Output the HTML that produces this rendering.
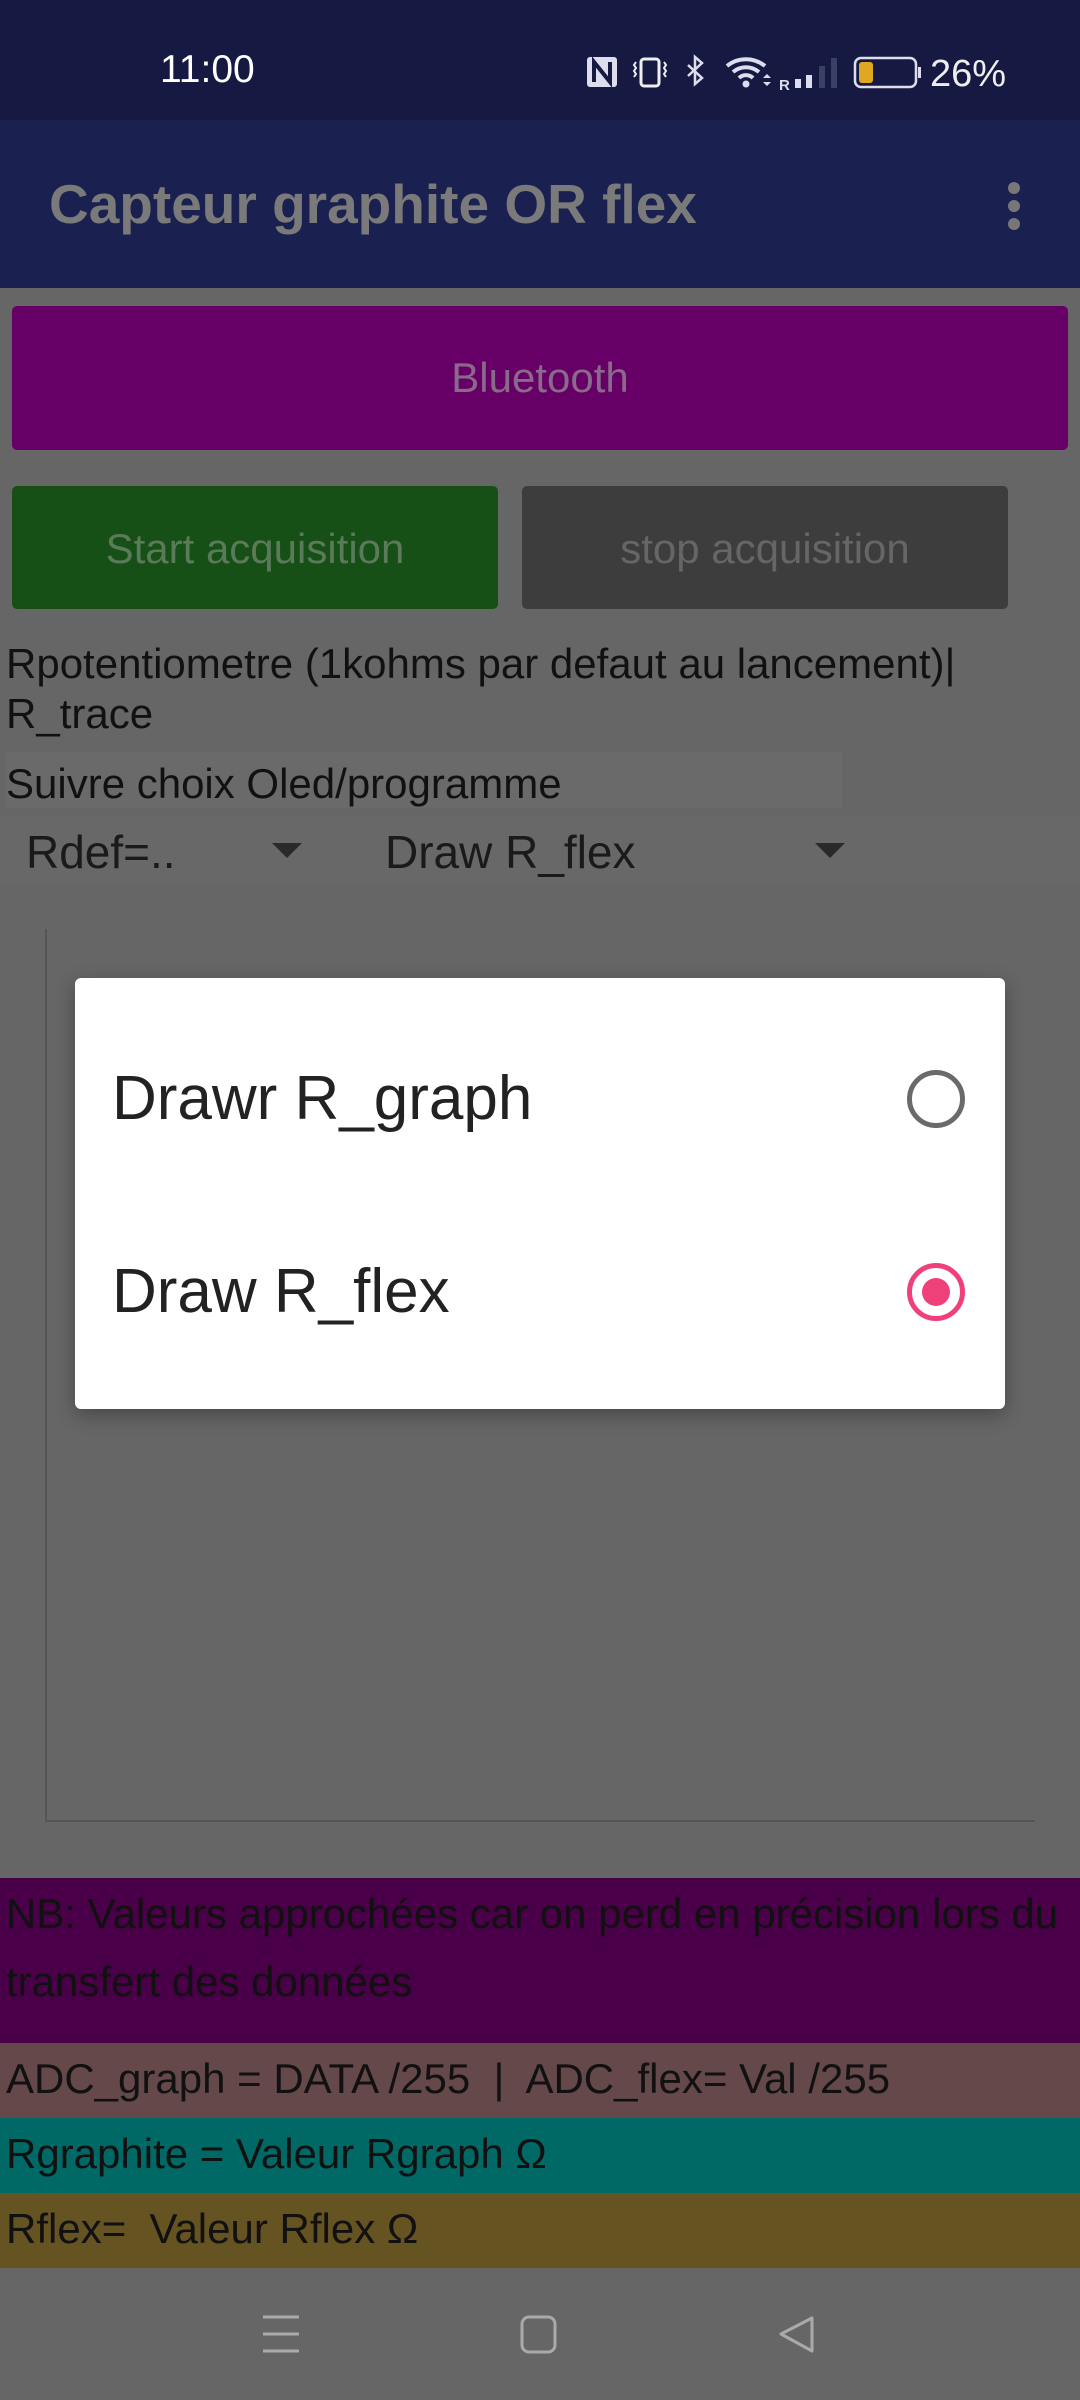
<!DOCTYPE html>
<html><head><meta charset="utf-8"><style>
*{margin:0;padding:0;box-sizing:border-box}
body{width:1080px;height:2400px;background:#666;position:relative;overflow:hidden;font-family:"Liberation Sans",sans-serif}
.a{position:absolute;white-space:nowrap}
.t{color:#111;font-size:42px;line-height:44px}
</style></head><body>
<div class="a" style="left:0;top:0;width:1080px;height:120px;background:#161a42"></div>
<div class="a" style="left:160px;top:48px;color:#fff;font-size:39px">11:00</div>
<svg class="a" style="left:580px;top:50px" width="430" height="45" viewBox="580 50 430 45">
 <rect x="587" y="57" width="30" height="30" rx="3" fill="#dde"/>
 <path d="M594 82V62l16 20V62" stroke="#161a42" stroke-width="4" fill="none"/>
 <rect x="641" y="59" width="18" height="27" rx="3" fill="none" stroke="#eee" stroke-width="3"/>
 <path d="M636 62l-2 3 2 3-2 3 2 3-2 3M664 62l2 3-2 3 2 3-2 3 2 3" stroke="#eee" stroke-width="2" fill="none"/>
 <path d="M688 65l14 13-7 6V57l7 6-14 13" stroke="#dde" stroke-width="2.5" fill="none"/>
 <path d="M727 66a30 30 0 0 1 38 0M733 72a20 20 0 0 1 26 0M739 78a10 10 0 0 1 14 0" stroke="#dde" stroke-width="4" fill="none"/>
 <circle cx="746" cy="84" r="3.5" fill="#dde"/>
 <path d="M763 78l4-4 4 4zM763 82l4 4 4-4z" fill="#dde"/>
 <text x="779" y="90" fill="#dde" font-size="15" font-weight="bold" font-family="Liberation Sans">R</text>
 <rect x="795" y="79" width="6" height="9" fill="#dde"/><rect x="806" y="75" width="6" height="13" fill="#dde"/>
 <rect x="819" y="66" width="6" height="22" fill="#3a3f66"/><rect x="831" y="58" width="6" height="30" fill="#3a3f66"/>
 <rect x="855" y="58" width="61" height="29" rx="6" fill="none" stroke="#dde" stroke-width="2.5"/>
 <rect x="918" y="67" width="3" height="11" fill="#dde"/>
 <rect x="859" y="62" width="14" height="21" rx="3" fill="#e0a820"/>
 <text x="930" y="86" fill="#eee" font-size="38" font-family="Liberation Sans">26%</text>
</svg>
<div class="a" style="left:0;top:120px;width:1080px;height:168px;background:#1a2050"></div>
<div class="a" style="left:49px;top:172px;color:#7a7a7a;font-size:55px;font-weight:bold">Capteur graphite OR flex</div>
<div class="a" style="left:1008px;top:182px;width:12px;height:12px;border-radius:6px;background:#777;box-shadow:0 18px 0 #777,0 36px 0 #777"></div>
<div class="a" style="left:12px;top:306px;width:1056px;height:144px;background:#660066;border-radius:5px;color:#8a6a8a;font-size:42px;text-align:center;line-height:144px">Bluetooth</div>
<div class="a" style="left:12px;top:486px;width:486px;height:123px;background:#165016;border-radius:5px;color:#5a7a5a;font-size:42px;text-align:center;line-height:126px">Start acquisition</div>
<div class="a" style="left:522px;top:486px;width:486px;height:123px;background:#3d3d3d;border-radius:5px;color:#666;font-size:42px;text-align:center;line-height:126px">stop acquisition</div>
<div class="a t" style="left:6px;top:642px">Rpotentiometre (1kohms par defaut au lancement)|</div>
<div class="a t" style="left:6px;top:692px">R_trace</div>
<div class="a" style="left:5px;top:752px;width:837px;height:56px;background:#6a6a6a"></div>
<div class="a t" style="left:6px;top:762px">Suivre choix Oled/programme</div>
<div class="a" style="left:0;top:815px;width:1080px;height:70px;background:#686868"></div>
<div class="a t" style="left:26px;top:828px;color:#1a1a1a;font-size:46px;line-height:48px">Rdef=..</div>
<div class="a" style="left:272px;top:843px;border-left:15px solid transparent;border-right:15px solid transparent;border-top:15px solid #2a2a2a"></div>
<div class="a t" style="left:385px;top:828px;color:#1a1a1a;font-size:46px;line-height:48px">Draw R_flex</div>
<div class="a" style="left:815px;top:843px;border-left:15px solid transparent;border-right:15px solid transparent;border-top:15px solid #2a2a2a"></div>
<div class="a" style="left:45px;top:929px;width:2px;height:893px;background:#555"></div>
<div class="a" style="left:45px;top:1820px;width:990px;height:2px;background:#555"></div>
<div class="a" style="left:75px;top:978px;width:930px;height:431px;background:#fff;border-radius:6px;box-shadow:0 6px 20px rgba(0,0,0,.3)"></div>
<div class="a" style="left:112px;top:1066px;color:#222;font-size:62px;line-height:66px">Drawr R_graph</div>
<div class="a" style="left:112px;top:1259px;color:#222;font-size:62px;line-height:66px">Draw R_flex</div>
<div class="a" style="left:907px;top:1070px;width:58px;height:58px;border:5px solid #6a6a6a;border-radius:50%"></div>
<div class="a" style="left:907px;top:1263px;width:58px;height:58px;border:5px solid #f0407a;border-radius:50%"></div>
<div class="a" style="left:922px;top:1278px;width:28px;height:28px;background:#f0407a;border-radius:50%"></div>
<div class="a" style="left:0;top:1878px;width:1080px;height:165px;background:#4a0048"></div>
<div class="a t" style="left:6px;top:1880px;line-height:68px">NB: Valeurs approchées car on perd en précision lors du<br>transfert des données</div>
<div class="a" style="left:0;top:2043px;width:1080px;height:75px;background:#65484a"></div>
<div class="a t" style="left:6px;top:2057px">ADC_graph = DATA /255&nbsp; |&nbsp; ADC_flex= Val /255</div>
<div class="a" style="left:0;top:2118px;width:1080px;height:75px;background:#006966"></div>
<div class="a t" style="left:6px;top:2132px">Rgraphite = Valeur Rgraph Ω</div>
<div class="a" style="left:0;top:2193px;width:1080px;height:75px;background:#665322"></div>
<div class="a t" style="left:6px;top:2207px">Rflex=&nbsp; Valeur Rflex Ω</div>
<svg class="a" style="left:0;top:2290px" width="1080" height="90" viewBox="0 2290 1080 90">
 <path d="M263 2317h36M263 2334h36M263 2351h36" stroke="#aaa" stroke-width="3"/>
 <rect x="522" y="2317" width="33" height="35" rx="7" fill="none" stroke="#aaa" stroke-width="3"/>
 <path d="M812 2318L781 2334l31 17z" fill="none" stroke="#aaa" stroke-width="3" stroke-linejoin="round"/>
</svg>
</body></html>
